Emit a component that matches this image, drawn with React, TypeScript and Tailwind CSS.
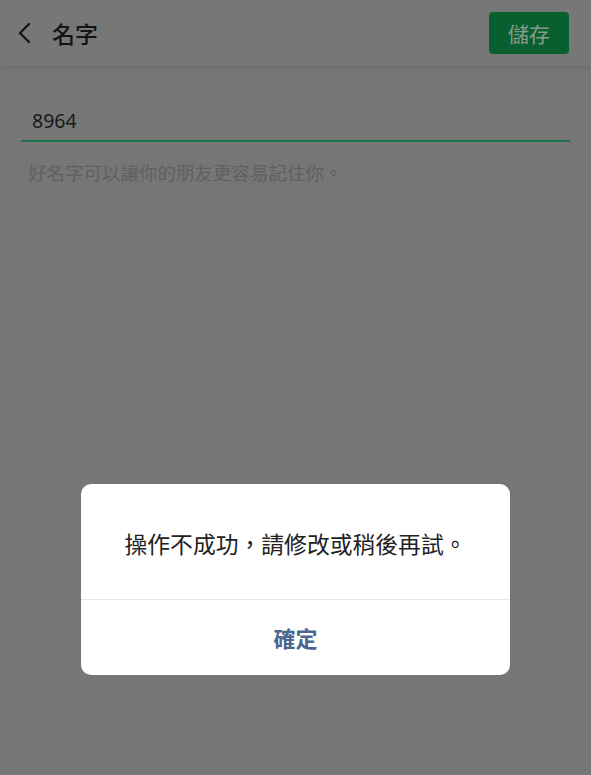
const CJK = { fontFamily: '"Noto Sans CJK TC", "Noto Sans", sans-serif' }

function ChevronLeft() {
    return (
        <svg width="16" height="24" viewBox="0 0 16 24" fill="none">
            <path d="M13 3 L4 12 L13 21" stroke="#141414" strokeWidth="2.2" strokeLinecap="round" strokeLinejoin="round" />
        </svg>
    )
}

export default function App() {
    return (
        <div className="w-[591px] h-[775px] bg-[#767676] flex flex-col" style={CJK}>
            <div className="h-[66px] flex items-center pl-[16px] pr-[22px] bg-[#777777] shadow-[0_2px_3px_rgba(0,0,0,0.06)]">
                <ChevronLeft />
                <span className="ml-[20px] text-[23px] font-medium text-[#141414] leading-none">名字</span>
                <button className="ml-auto w-[80px] h-[42px] rounded-[4px] bg-[#08602f] text-[#8a9a8e] text-[21px] leading-none">
                    儲存
                </button>
            </div>
            <div className="px-[21px] pt-[43px]">
                <div className="border-b-2 border-[#1b7446] pb-[7px] pl-[11px]">
                    <span className="text-[19.5px] text-[#1a1a1a] leading-none" style={{ fontFamily: '"Noto Sans", sans-serif' }}>8964</span>
                </div>
                <p className="mt-[21px] pl-[7px] text-[18.5px] text-[#606060] leading-none">好名字可以讓你的朋友更容易記住你。</p>
            </div>
            <div className="flex-1 flex flex-col">
                <div className="mt-[302px] mx-auto w-[429px] bg-white rounded-[10px] overflow-hidden">
                    <div className="h-[116px] flex items-center justify-center border-b border-[#e6e6e6]">
                        <span className="text-[22.8px] text-[#222222] leading-none pt-[6px]">操作不成功，請修改或稍後再試。</span>
                    </div>
                    <div className="h-[75px] flex items-center justify-center">
                        <span className="text-[22px] font-bold text-[#4a6890] leading-none">確定</span>
                    </div>
                </div>
            </div>
        </div>
    )
}
